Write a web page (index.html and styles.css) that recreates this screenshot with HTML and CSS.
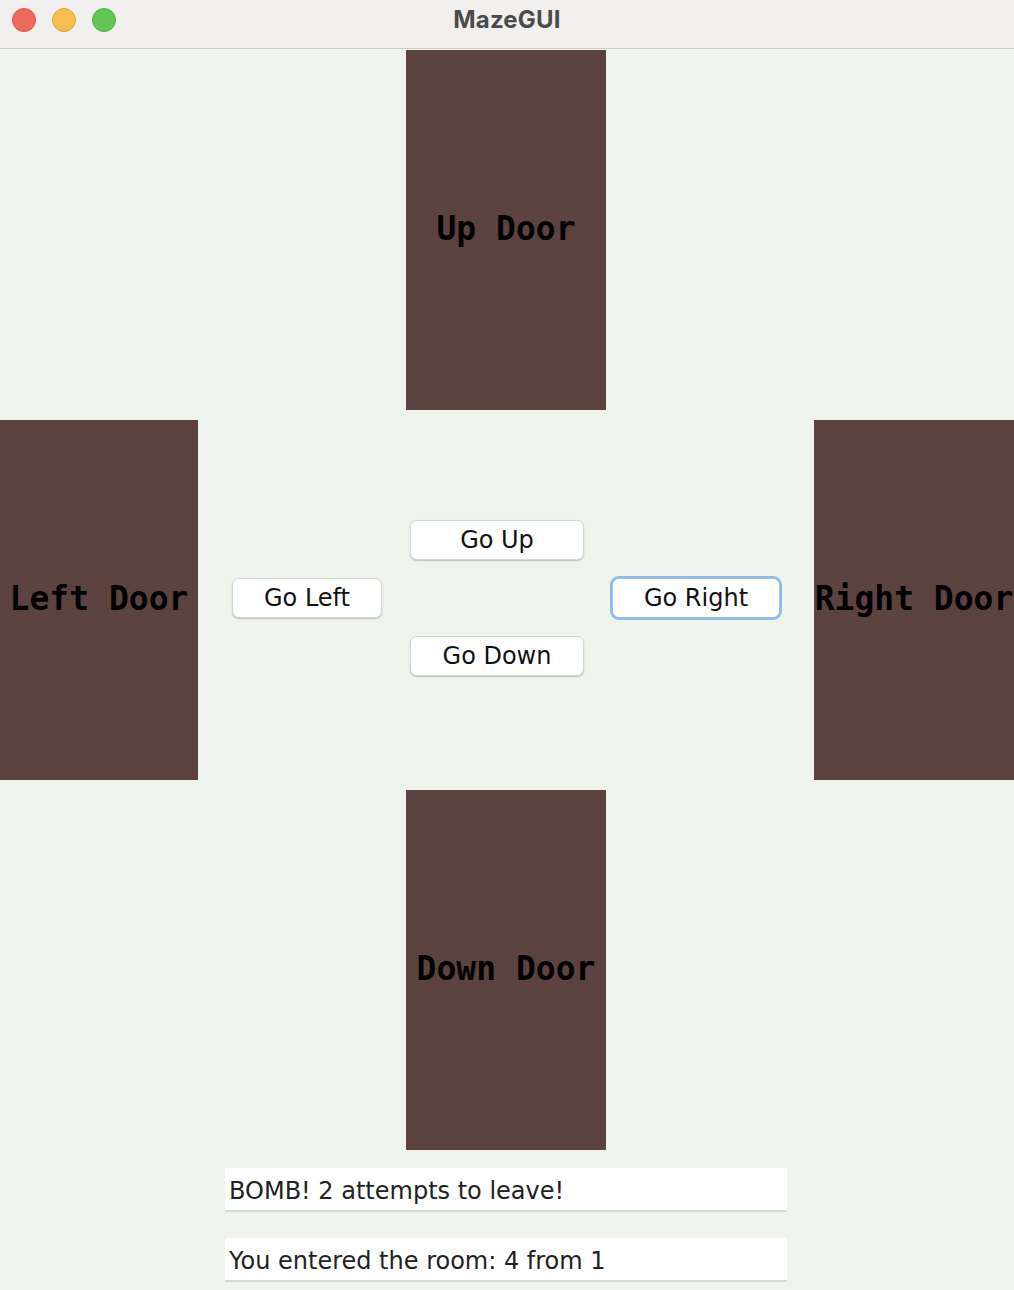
FILE: index.html
```html
<!DOCTYPE html>
<html>
<head>
<meta charset="utf-8">
<title>MazeGUI</title>
<link rel="stylesheet" href="styles.css">
</head>
<body>
<div class="window">
  <div class="titlebar">
    <div class="lights">
      <span class="light red"></span>
      <span class="light yellow"></span>
      <span class="light green"></span>
    </div>
    <div class="title">MazeGUI</div>
  </div>
  <div class="content">
    <div class="row-vert">
      <div class="door">Up Door</div>
    </div>
    <div class="row-mid">
      <div class="door side-left">Left Door</div>
      <div class="controls">
        <div class="pad">
          <button class="btn b-up">Go Up</button>
          <button class="btn b-left">Go Left</button>
          <button class="btn b-right focused">Go Right</button>
          <button class="btn b-down">Go Down</button>
        </div>
      </div>
      <div class="door side-right">Right Door</div>
    </div>
    <div class="row-vert">
      <div class="door">Down Door</div>
    </div>
    <div class="fields">
      <div class="field">BOMB! 2 attempts to leave!</div>
      <div class="field">You entered the room: 4 from 1</div>
    </div>
  </div>
</div>
</body>
</html>
```

FILE: styles.css
```css
html, body {
  margin: 0;
  padding: 0;
}
body {
  width: 1014px;
  height: 1290px;
  overflow: hidden;
  background: #eef4ec;
}
.window {
  display: flex;
  flex-direction: column;
  width: 1014px;
  height: 1290px;
}
.titlebar {
  position: relative;
  height: 48px;
  background: #f1f0ee;
  border-bottom: 1px solid #c8cdc7;
  display: flex;
  align-items: center;
  justify-content: center;
  flex: none;
}
.lights {
  position: absolute;
  left: 12px;
  top: 8px;
  display: flex;
  gap: 16px;
}
.light {
  width: 24px;
  height: 24px;
  border-radius: 50%;
  box-sizing: border-box;
}
.light.red { background: #ee6a5f; border: 1px solid #d5544a; }
.light.yellow { background: #f6be50; border: 1px solid #dda23e; }
.light.green { background: #62c655; border: 1px solid #4fad45; }
.title {
  font-family: Inter, "Liberation Sans", sans-serif;
  font-weight: 700;
  font-size: 24px;
  color: #4b4b4b;
  padding-bottom: 9px;
  letter-spacing: 0.2px;
}
.content {
  flex: 1;
  display: flex;
  flex-direction: column;
  padding-top: 1px;
  background: #eef4ec;
}
.door {
  background: #5d4340;
  display: flex;
  align-items: center;
  justify-content: center;
  font-family: "DejaVu Sans Mono", "Liberation Mono", monospace;
  font-weight: 700;
  font-size: 33px;
  color: #000;
  white-space: nowrap;
  height: 360px;
  width: 200px;
  box-sizing: border-box;
  padding-bottom: 4px;
}
.row-vert {
  display: flex;
  padding-left: 406px;
}
.row-mid {
  display: flex;
  margin: 10px 0;
  height: 360px;
}
.door.side-left {
  width: 198px;
}
.door.side-right {
  width: 200px;
  overflow: visible;
}
.controls {
  flex: 1;
  display: flex;
  align-items: center;
  justify-content: center;
  padding-bottom: 4px;
}
.pad {
  display: grid;
  grid-template-columns: 150px 174px 168px;
  grid-template-rows: 40px 40px 40px;
  column-gap: 28px;
  row-gap: 18px;
}
.btn {
  background: #ffffff;
  border: 1px solid #d6d8d6;
  border-radius: 7px;
  box-shadow: 0 1px 1.5px rgba(0, 0, 0, 0.22);
  font-family: "DejaVu Sans", "Liberation Sans", sans-serif;
  font-size: 24px;
  color: #111;
  padding: 0;
  margin: 0;
  line-height: 1;
}
.b-up { grid-column: 2; grid-row: 1; }
.b-left { grid-column: 1; grid-row: 2; }
.b-right { grid-column: 3; grid-row: 2; }
.b-down { grid-column: 2; grid-row: 3; }
.btn.focused {
  border: 1px solid #9cc3ee;
  box-shadow: 0 0 0 2px #8cbaeb;
}
.fields {
  display: flex;
  flex-direction: column;
  gap: 26px;
  padding-left: 225px;
  margin-top: 18px;
}
.field {
  width: 562px;
  height: 44px;
  box-sizing: border-box;
  background: #ffffff;
  border-bottom: 2px solid #d3dbd2;
  padding-left: 4px;
  padding-top: 4px;
  display: flex;
  align-items: center;
  font-family: "DejaVu Sans", "Liberation Sans", sans-serif;
  font-size: 24px;
  color: #222;
  white-space: nowrap;
}
```
